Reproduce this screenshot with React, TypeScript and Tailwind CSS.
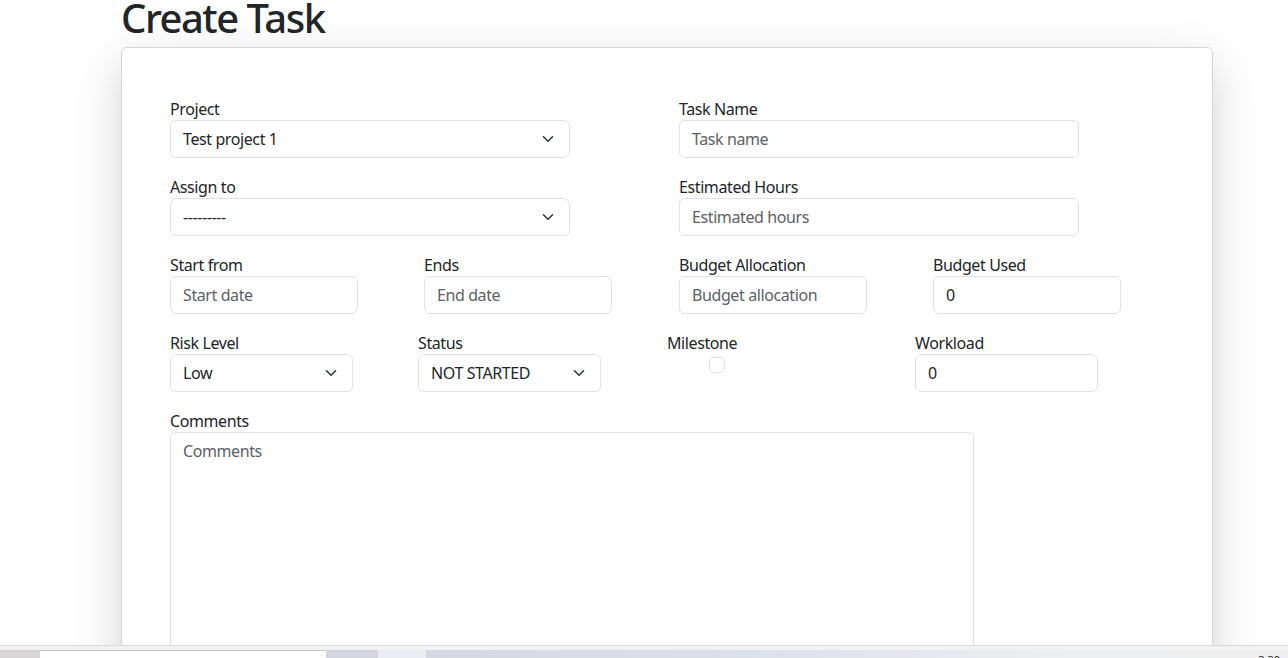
import React from "react";

const font = { fontFamily: '"Noto Sans", "Open Sans", sans-serif' };

function Chevron() {
  return (
    <svg width="12" height="8" viewBox="0 0 12 8" className="shrink-0">
      <path d="M1.5 1.75 6 6.25l4.5-4.5" fill="none" stroke="#343a40" strokeWidth="1.6" strokeLinecap="round" strokeLinejoin="round" />
    </svg>
  );
}

function Label({ children }: { children: React.ReactNode }) {
  return <div className="h-6 pt-px text-[16px] leading-6 tracking-[-0.4px] text-[#212529]">{children}</div>;
}

function Select({ value, w }: { value: string; w: string }) {
  return (
    <div className={`${w} h-[38px] flex items-center justify-between rounded-[6px] border border-[#dee2e6] bg-white pl-3 pr-[15px] text-[16px] leading-6 tracking-[-0.4px] text-[#212529]`}>
      <span>{value}</span>
      <Chevron />
    </div>
  );
}

function Input({ placeholder, value, w }: { placeholder?: string; value?: string; w: string }) {
  return (
    <div className={`${w} h-[38px] flex items-center rounded-[6px] border border-[#dee2e6] bg-white px-3 text-[16px] leading-6 tracking-[-0.4px]`}>
      {value !== undefined ? (
        <span className="text-[#212529]">{value}</span>
      ) : (
        <span className="text-[#5c6166]">{placeholder}</span>
      )}
    </div>
  );
}

export default function App() {
  return (
    <div style={font} className="h-[658px] w-[1288px] overflow-hidden bg-white flex flex-col">
      <div className="h-[645px] overflow-hidden relative">
        <h1 className="ml-[121px] -mt-[6px] text-[40px] leading-[48px] font-medium text-[#212529] tracking-[-1.5px]">
          Create Task
        </h1>
        <div className="ml-[121px] mt-[5px] w-[1092px] rounded-[6px] border border-[#d6d6d6] bg-white p-12 shadow-[0_1rem_3rem_rgba(0,0,0,0.175)]">
          <div className="flex flex-col gap-4">
            <div className="grid grid-cols-[509px_1fr]">
              <div>
                <Label>Project</Label>
                <Select value="Test project 1" w="w-[400px]" />
              </div>
              <div>
                <Label>Task Name</Label>
                <Input placeholder="Task name" w="w-[400px]" />
              </div>
            </div>
            <div className="grid grid-cols-[509px_1fr]">
              <div>
                <Label>Assign to</Label>
                <Select value="---------" w="w-[400px]" />
              </div>
              <div>
                <Label>Estimated Hours</Label>
                <Input placeholder="Estimated hours" w="w-[400px]" />
              </div>
            </div>
            <div className="grid grid-cols-[254px_255px_254px_1fr]">
              <div>
                <Label>Start from</Label>
                <Input placeholder="Start date" w="w-[188px]" />
              </div>
              <div>
                <Label>Ends</Label>
                <Input placeholder="End date" w="w-[188px]" />
              </div>
              <div>
                <Label>Budget Allocation</Label>
                <Input placeholder="Budget allocation" w="w-[188px]" />
              </div>
              <div>
                <Label>Budget Used</Label>
                <Input value="0" w="w-[188px]" />
              </div>
            </div>
            <div className="grid grid-cols-[248px_249px_248px_1fr]">
              <div>
                <Label>Risk Level</Label>
                <Select value="Low" w="w-[183px]" />
              </div>
              <div>
                <Label>Status</Label>
                <Select value="NOT STARTED" w="w-[183px]" />
              </div>
              <div>
                <Label>Milestone</Label>
                <div className="ml-[42px] mt-[3px] h-4 w-4 rounded-[4px] border border-[#dee2e6] bg-white" />
              </div>
              <div>
                <Label>Workload</Label>
                <Input value="0" w="w-[183px]" />
              </div>
            </div>
            <div>
              <Label>Comments</Label>
              <div className="w-[804px] h-[300px] rounded-[6px] border border-[#dee2e6] bg-white px-3 py-[6px] text-[16px] leading-6 tracking-[-0.4px] text-[#5c6166]">
                Comments
              </div>
            </div>
          </div>
        </div>
      </div>
      <div className="h-[13px] flex flex-col">
        <div className="h-px bg-[#d9d9d9]" />
        <div className="h-[4px] bg-[#f2f2f2]" />
        <div className="flex-1 flex relative">
          <div className="w-[40px] bg-[#d7d5d5]" />
          <div className="w-[286px] bg-white border-t border-[#c6c6c6]" />
          <div className="w-[52px] bg-[#d3d6e0]" />
          <div className="w-[48px] bg-[#ecedf2]" />
          <div className="flex-1 bg-[linear-gradient(90deg,#d5d8e3_0%,#dde1ea_40%,#eeeff1_75%,#efefef_100%)]" />
          <div className="absolute right-[8px] top-[3px] text-[11px] leading-[14px] text-[#222]">3:30</div>
        </div>
      </div>
    </div>
  );
}
